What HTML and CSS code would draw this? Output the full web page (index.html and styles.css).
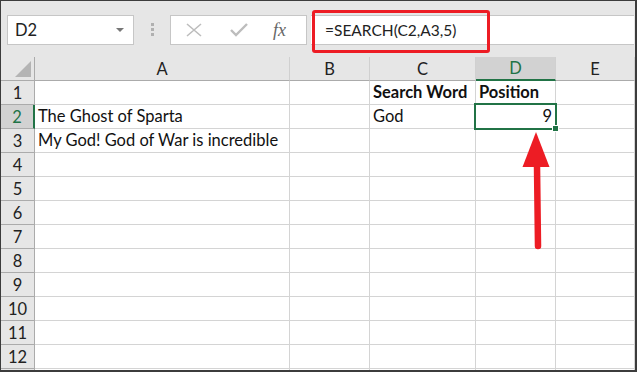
FILE: index.html
```html
<!DOCTYPE html>
<html lang="en">

<head>
    <meta charset="UTF-8">
    <title>SEARCH function</title>
    <link rel="stylesheet" href="styles.css">
</head>

<body>

    <div class="window">
        <div class="toolbar">
            <div class="namebox"><span>D2</span><span class="caret"></span></div>
            <div class="grip"><i></i><i></i><i></i></div>
            <div class="fnbox">
                <svg class="icon" width="18" height="14" viewBox="0 0 18 14">
                    <path d="M2 1 L16 13 M16 1 L2 13" stroke="#bdbdbd" stroke-width="1.6" fill="none" />
                </svg>
                <svg class="icon" width="18" height="14" viewBox="0 0 18 14">
                    <path d="M1 7 L6 12 L17 1" stroke="#bdbdbd" stroke-width="2.4" fill="none" />
                </svg>
                <span class="fx">fx</span>
            </div>
            <div class="formula">=SEARCH(C2,A3,5)</div>
            <div class="callout"></div>
        </div>

        <div class="sheet">
            <div class="corner"><span class="tri"></span></div>
            <div class="colhead">A</div>
            <div class="colhead">B</div>
            <div class="colhead">C</div>
            <div class="colhead active">D</div>
            <div class="colhead">E</div>

            <div class="rowhead">1</div>
            <div class="cell"></div>
            <div class="cell"></div>
            <div class="cell bold">Search Word</div>
            <div class="cell bold">Position</div>
            <div class="cell"></div>

            <div class="rowhead active">2</div>
            <div class="cell">The Ghost of Sparta</div>
            <div class="cell"></div>
            <div class="cell">God</div>
            <div class="cell num">9</div>
            <div class="cell"></div>

            <div class="rowhead">3</div>
            <div class="cell">My God! God of War is incredible</div>
            <div class="cell"></div>
            <div class="cell"></div>
            <div class="cell"></div>
            <div class="cell"></div>

            <div class="rowhead">4</div>
            <div class="cell"></div><div class="cell"></div><div class="cell"></div><div class="cell"></div><div class="cell"></div>
            <div class="rowhead">5</div>
            <div class="cell"></div><div class="cell"></div><div class="cell"></div><div class="cell"></div><div class="cell"></div>
            <div class="rowhead">6</div>
            <div class="cell"></div><div class="cell"></div><div class="cell"></div><div class="cell"></div><div class="cell"></div>
            <div class="rowhead">7</div>
            <div class="cell"></div><div class="cell"></div><div class="cell"></div><div class="cell"></div><div class="cell"></div>
            <div class="rowhead">8</div>
            <div class="cell"></div><div class="cell"></div><div class="cell"></div><div class="cell"></div><div class="cell"></div>
            <div class="rowhead">9</div>
            <div class="cell"></div><div class="cell"></div><div class="cell"></div><div class="cell"></div><div class="cell"></div>
            <div class="rowhead">10</div>
            <div class="cell"></div><div class="cell"></div><div class="cell"></div><div class="cell"></div><div class="cell"></div>
            <div class="rowhead">11</div>
            <div class="cell"></div><div class="cell"></div><div class="cell"></div><div class="cell"></div><div class="cell"></div>
            <div class="rowhead">12</div>
            <div class="cell"></div><div class="cell"></div><div class="cell"></div><div class="cell"></div><div class="cell"></div>
            <div class="rowhead"></div>
            <div class="cell"></div><div class="cell"></div><div class="cell"></div><div class="cell"></div><div class="cell"></div>
        </div>

        <div class="selection"><span class="handle"></span></div>

        <svg class="arrow" width="40" height="125" viewBox="0 0 40 125">
            <path d="M17 114 L16 34" stroke="#ed1c24" stroke-width="6.5" stroke-linecap="round" fill="none" />
            <path d="M15 0 L28.5 35 L1.5 35 Z" fill="#ed1c24" />
        </svg>
    </div>

</body>

</html>
```

FILE: styles.css
```css
body {
    margin: 0;
    font-family: Lato, "Open Sans", sans-serif;
}

.window {
    position: relative;
    width: 637px;
    height: 372px;
    box-sizing: border-box;
    border-top: 1px solid #3c3c3c;
    border-left: 1px solid #3c3c3c;
    border-right: 2px solid #3c3c3c;
    border-bottom: 2px solid #3c3c3c;
    overflow: hidden;
    background: #e6e6e6;
}

/* formula bar */

.toolbar {
    position: relative;
    display: flex;
    align-items: flex-start;
    height: 56px;
    padding-top: 14px;
    box-sizing: border-box;
}

.namebox {
    display: flex;
    align-items: center;
    justify-content: space-between;
    width: 127px;
    height: 30px;
    margin-left: 6px;
    padding: 0 9px 0 7px;
    box-sizing: border-box;
    background: #fff;
    border: 1px solid #c6c6c6;
    font-size: 16.5px;
    color: #222;
}

.caret {
    width: 0;
    height: 0;
    border-left: 4px solid transparent;
    border-right: 4px solid transparent;
    border-top: 4px solid #777;
}

.grip {
    display: flex;
    flex-direction: column;
    gap: 2px;
    margin: 8px 0 0 17px;
}

.grip i {
    display: block;
    width: 3px;
    height: 3px;
    background: #b0b0b0;
}

.fnbox {
    display: flex;
    align-items: center;
    width: 137px;
    height: 30px;
    margin-left: 16px;
    box-sizing: border-box;
    background: #fff;
    border: 1px solid #c6c6c6;
}

.fnbox .icon:first-child {
    margin-left: 14px;
}

.fnbox .icon + .icon {
    margin-left: 27px;
}

.fx {
    margin-left: 25px;
    font-family: "Liberation Serif", serif;
    font-style: italic;
    font-size: 18px;
    color: #666;
}

.formula {
    width: 323px;
    height: 30px;
    margin-left: 4px;
    padding-left: 14px;
    box-sizing: border-box;
    background: #fff;
    border-top: 1px solid #c6c6c6;
    border-bottom: 1px solid #c6c6c6;
    font-size: 15.5px;
    line-height: 28px;
    color: #222;
}

.callout {
    position: absolute;
    left: 311px;
    top: 9px;
    width: 178px;
    height: 43px;
    box-sizing: border-box;
    border: 3px solid #ed1c24;
    border-radius: 3px;
}

/* grid */

.sheet {
    display: grid;
    grid-template-columns: 34px 255px 80px 106px 80px 79px;
    grid-auto-rows: 24px;
    background: #fff;
}

.sheet > div {
    box-sizing: border-box;
    border-right: 1px solid #d4d4d4;
    border-bottom: 1px solid #d4d4d4;
    font-size: 16.5px;
    color: #111;
    white-space: nowrap;
}

.sheet .corner,
.sheet .colhead,
.sheet .rowhead {
    background: #e6e6e6;
    border-color: #ababab;
    color: #222;
    display: flex;
    align-items: center;
    justify-content: center;
}

.corner {
    position: relative;
}

.tri {
    position: absolute;
    right: 3px;
    bottom: 3px;
    width: 0;
    height: 0;
    border-left: 16px solid transparent;
    border-bottom: 16px solid #b4b4b4;
}

.sheet .colhead {
    border-right-color: #d0d0d0;
}

.sheet .colhead.active {
    background: #d2d2d2;
    color: #217346;
    border-bottom: 2px solid #217346;
}

.sheet .rowhead.active {
    background: #d2d2d2;
    color: #217346;
    border-right: 2px solid #217346;
}

.cell {
    padding: 0 3px;
    line-height: 23px;
}

.bold {
    font-weight: bold;
}

.num {
    text-align: right;
}

/* selected cell */

.selection {
    position: absolute;
    left: 473px;
    top: 102px;
    width: 83px;
    height: 27px;
    box-sizing: border-box;
    border: 2px solid #217346;
}

.handle {
    position: absolute;
    right: -4px;
    bottom: -4px;
    width: 5px;
    height: 5px;
    background: #217346;
    border: 1px solid #fff;
}

.arrow {
    position: absolute;
    left: 520px;
    top: 131px;
}
```
